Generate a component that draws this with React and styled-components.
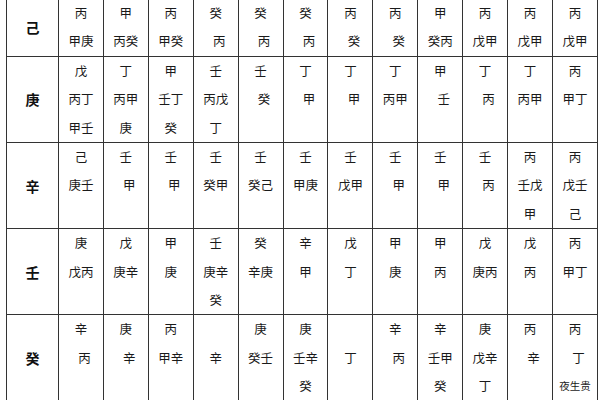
import React from 'react';
import styled, { createGlobalStyle } from 'styled-components';

const GlobalStyle = createGlobalStyle`
  html, body {
    margin: 0;
    padding: 0;
    background: #ffffff;
  }
  body {
    font-family: "Noto Sans CJK SC", "Noto Sans", sans-serif;
    color: #111;
  }
`;

const Wrap = styled.div`
  width: 600px;
  height: 400px;
  overflow: hidden;
`;

const Table = styled.table`
  border-collapse: collapse;
  table-layout: fixed;
  width: 592px;
  margin: -2px 0 0 6px;
`;

const LabelCell = styled.td`
  width: 51px;
  border: 1px solid #333;
  padding: 0;
  text-align: center;
  vertical-align: middle;
  font-size: 14px;
  font-weight: 700;
  color: #111;
`;

const Cell = styled.td`
  border: 1px solid #333;
  padding: 0;
  text-align: center;
  vertical-align: top;
`;

const Line = styled.div`
  height: 28.4px;
  line-height: 28.4px;
  font-size: ${(p) => (p.$small ? '10.5px' : '12.5px')};
  padding-left: ${(p) => (p.$indent ? '7px' : '0')};
  white-space: nowrap;
  color: #1a1a1a;
`;

// ' ' at the start = nudged right, '~' = small note text
const rows = [
  {
    label: '己',
    cells: [
      ['丙', '甲庚'], ['甲', '丙癸'], ['丙', '甲癸'], ['癸', ' 丙'], ['癸', ' 丙'], ['癸', ' 丙'],
      ['丙', ' 癸'], ['丙', ' 癸'], ['甲', '癸丙'], ['丙', '戊甲'], ['丙', '戊甲'], ['丙', '戊甲'],
    ],
  },
  {
    label: '庚',
    cells: [
      ['戊', '丙丁', '甲壬'], ['丁', '丙甲', '庚'], ['甲', '壬丁', '癸'], ['壬', '丙戊', '丁'],
      ['壬', ' 癸'], ['丁', ' 甲'], ['丁', ' 甲'], ['丁', '丙甲'], ['甲', ' 壬'], ['丁', ' 丙'],
      ['丁', '丙甲'], ['丙', '甲丁'],
    ],
  },
  {
    label: '辛',
    cells: [
      ['己', '庚壬'], ['壬', ' 甲'], ['壬', ' 甲'], ['壬', '癸甲'], ['壬', '癸己'], ['壬', '甲庚'],
      ['壬', '戊甲'], ['壬', ' 甲'], ['壬', ' 甲'], ['壬', ' 丙'], ['丙', '壬戊', '甲'], ['丙', '戊壬', '己'],
    ],
  },
  {
    label: '壬',
    cells: [
      ['庚', '戊丙'], ['戊', '庚辛'], ['甲', '庚'], ['壬', '庚辛', '癸'], ['癸', '辛庚'], ['辛', '甲'],
      ['戊', '丁'], ['甲', '庚'], ['甲', '丙'], ['戊', '庚丙'], ['戊', '丙'], ['丙', '甲丁'],
    ],
  },
  {
    label: '癸',
    cells: [
      ['辛', ' 丙'], ['庚', ' 辛'], ['丙', '甲辛'], ['', '辛'], ['庚', '癸壬'], ['庚', '壬辛', '癸'],
      ['', '丁'], ['辛', ' 丙'], ['辛', '壬甲', '癸'], ['庚', '戊辛', '丁'], ['丙', ' 辛'], ['丙', ' 丁', '~夜生贵'],
    ],
  },
];

function CellLines({ lines }) {
  return lines.map((raw, i) => {
    const indent = raw.startsWith(' ');
    const small = raw.startsWith('~');
    const text = raw.replace(/^[ ~]/, '');
    return (
      <Line key={i} $indent={indent} $small={small}>
        {text || '\u00a0'}
      </Line>
    );
  });
}

export default function App() {
  return (
    <Wrap>
      <GlobalStyle />
      <Table>
        <tbody>
          {rows.map((row) => (
            <tr key={row.label}>
              <LabelCell>{row.label}</LabelCell>
              {row.cells.map((lines, i) => (
                <Cell key={i}>
                  <CellLines lines={lines} />
                </Cell>
              ))}
            </tr>
          ))}
        </tbody>
      </Table>
    </Wrap>
  );
}
